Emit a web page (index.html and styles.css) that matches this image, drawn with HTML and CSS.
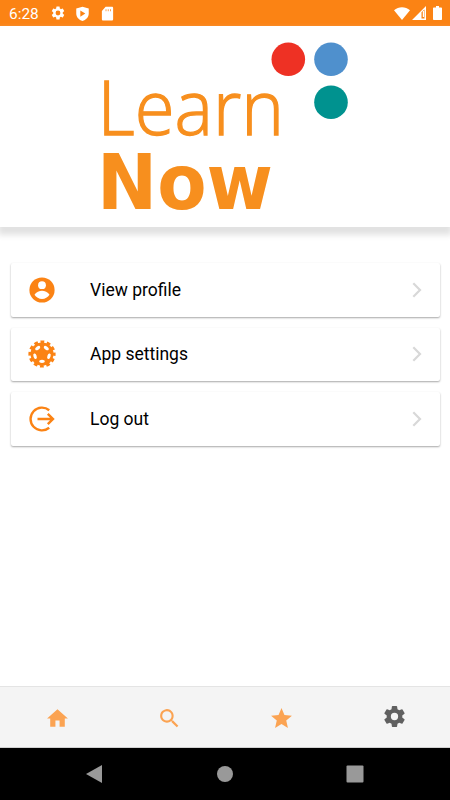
FILE: index.html
```html
<!DOCTYPE html>
<html lang="en">

<head>
  <meta charset="UTF-8">
  <meta name="viewport" content="width=device-width, initial-scale=1.0">
  <title>Learn Now - Settings</title>
  <link rel="stylesheet" href="styles.css">
</head>

<body>
  <div class="status-bar">
    <span class="time">6:28</span>
    <svg class="status-icon" viewBox="0 0 24 24"><path d="M19.14 12.94c.04-.3.06-.61.06-.94s-.02-.64-.07-.94l2.03-1.58a.49.49 0 0 0 .12-.61l-1.92-3.32a.49.49 0 0 0-.59-.22l-2.39.96a7 7 0 0 0-1.62-.94L14.4 2.81a.48.48 0 0 0-.48-.41h-3.84a.47.47 0 0 0-.47.41l-.36 2.54a7.3 7.3 0 0 0-1.62.94l-2.39-.96a.48.48 0 0 0-.59.22L2.74 8.87a.47.47 0 0 0 .12.61l2.03 1.58a6 6 0 0 0 0 1.88l-2.03 1.58a.49.49 0 0 0-.12.61l1.92 3.32c.12.22.37.29.59.22l2.39-.96c.5.38 1.03.7 1.62.94l.36 2.54c.05.24.24.41.48.41h3.84c.24 0 .44-.17.47-.41l.36-2.54a7 7 0 0 0 1.62-.94l2.39.96c.22.08.47 0 .59-.22l1.92-3.32a.47.47 0 0 0-.12-.61zM12 15.6a3.6 3.6 0 1 1 0-7.2 3.6 3.6 0 0 1 0 7.2z"/></svg>
    <svg class="status-icon shield" viewBox="0 0 24 24"><path fill-rule="evenodd" d="M12 1 2 4v8c0 6 4.300 10.200 10 12 5.700-1.800 10-6 10-12V4zM8.500 7v10l8-5z"/></svg>
    <svg class="status-icon sd" viewBox="0 0 24 24"><path fill-rule="evenodd" d="M19 1H9L3 8v13c0 1.100.9 2 2 2h14c1.100 0 2-.9 2-2V3c0-1.100-.9-2-2-2zM9 5v3.500h1.200V5zm3.500 0v3.500h1.200V5zm3.500 0v3.500h1.200V5z"/></svg>
    <div class="signals">
      <svg width="16" height="13" viewBox="0 0 16 13"><path d="M0 3.200C4.600-.9 11.400-.9 16 3.200L8 13z"/></svg>
      <svg width="14" height="14" viewBox="0 0 14 14"><path fill-rule="evenodd" d="M14 0v14H0zM9.500 6.200v6.300h3V3.500z"/><path d="M10.800 5h1.200v6h-1.200z"/></svg>
      <svg class="battery" width="9" height="14" viewBox="0 0 9 14"><path d="M3 0h3v1.500h2.200q.8 0 .8.800v10.900q0 .8-.8.800H.8q-.8 0-.8-.8V2.300q0-.8.8-.8H3z"/></svg>
    </div>
  </div>

  <header class="header">
    <svg class="logo" viewBox="0 0 270 200">
      <text class="logo-learn" x="7.500" y="108.800" textLength="186.500" lengthAdjust="spacingAndGlyphs">Learn</text>
      <text class="logo-now" x="7" y="183" textLength="176" lengthAdjust="spacingAndGlyphs">Now</text>
      <circle cx="198.300" cy="33.300" r="16.800" fill="#ee3124"/>
      <circle cx="241" cy="33.300" r="16.800" fill="#4f90cd"/>
      <circle cx="241" cy="76.200" r="16.800" fill="#00928f"/>
    </svg>
  </header>

  <main class="menu">
    <a class="card">
      <svg class="card-icon" viewBox="0 0 30 30">
        <circle cx="15" cy="15" r="12.600"/>
        <circle class="hole" cx="15" cy="10.200" r="3.900"/>
        <path class="hole" d="M7.500 19.700c1.500-2.700 5-3.900 7.500-3.900s6 1.200 7.500 3.900c-1.700 2.700-4.400 4.200-7.500 4.200s-5.800-1.500-7.500-4.200z"/>
      </svg>
      <span class="card-title">View profile</span>
      <svg class="arrow" viewBox="0 0 10 16"><path d="m1.300 1.300 6.700 6.700-6.700 6.700"/></svg>
    </a>
    <a class="card">
      <svg class="card-icon" viewBox="0 0 30 30">
        <circle cx="15" cy="15" r="11.500"/>
        <circle class="teeth" cx="15" cy="15" r="12"/>
        <g class="hole" transform="translate(15 15)">
          <ellipse cy="7.300" rx="2.900" ry="1.600"/>
          <ellipse cy="7.300" rx="2.900" ry="1.600" transform="rotate(72)"/>
          <ellipse cy="7.300" rx="2.900" ry="1.600" transform="rotate(144)"/>
          <ellipse cy="7.300" rx="2.900" ry="1.600" transform="rotate(216)"/>
          <ellipse cy="7.300" rx="2.900" ry="1.600" transform="rotate(288)"/>
        </g>
      </svg>
      <span class="card-title">App settings</span>
      <svg class="arrow" viewBox="0 0 10 16"><path d="m1.300 1.300 6.700 6.700-6.700 6.700"/></svg>
    </a>
    <a class="card">
      <svg class="card-icon logout" viewBox="0 0 30 30">
        <path d="M22.200 6.200A11.400 11.400 0 1 0 22.200 23.800M10.500 15H25.500M20.800 9.800 26 15l-5.200 5.200"/>
      </svg>
      <span class="card-title">Log out</span>
      <svg class="arrow" viewBox="0 0 10 16"><path d="m1.300 1.300 6.700 6.700-6.700 6.700"/></svg>
    </a>
  </main>

  <nav class="tabs">
    <a class="tab"><svg viewBox="0 0 24 24"><path d="M10 20v-6h4v6h5v-8h3L12 3 2 12h3v8z"/></svg></a>
    <a class="tab"><svg viewBox="0 0 24 24"><path d="M15.500 14h-.79l-.28-.27A6.500 6.500 0 1 0 13.730 14.430l.27.28v.79l5 4.990L20.490 19zm-6 0a4.500 4.500 0 1 1 0-9 4.500 4.500 0 0 1 0 9z"/></svg></a>
    <a class="tab"><svg viewBox="0 0 24 24"><path d="M12 17.270 18.180 21l-1.640-7.030L22 9.240l-7.190-.61L12 2 9.190 8.630 2 9.240l5.460 4.730L5.820 21z"/></svg></a>
    <a class="tab active"><svg viewBox="0 0 24 24"><path d="M19.430 12.980c.04-.32.07-.64.07-.98s-.03-.66-.07-.98l2.110-1.650a.5.5 0 0 0 .12-.64l-2-3.460a.5.5 0 0 0-.61-.22l-2.490 1a7.300 7.300 0 0 0-1.690-.98l-.38-2.650A.49.49 0 0 0 14 2h-4a.49.49 0 0 0-.49.420l-.38 2.650c-.61.25-1.170.59-1.690.98l-2.490-1a.49.49 0 0 0-.61.220l-2 3.460a.49.49 0 0 0 .12.640l2.110 1.650a7.900 7.900 0 0 0 0 1.960l-2.110 1.650a.5.5 0 0 0-.12.640l2 3.460c.12.220.39.300.61.220l2.490-1c.52.400 1.080.730 1.690.980l.38 2.650c.03.240.24.420.49.420h4c.25 0 .46-.18.490-.42l.38-2.650c.61-.25 1.170-.59 1.690-.98l2.490 1c.23.090.49 0 .61-.22l2-3.460a.5.5 0 0 0-.12-.64zM12 15.500a3.500 3.500 0 1 1 0-7 3.500 3.500 0 0 1 0 7z"/></svg></a>
  </nav>

  <div class="system-bar">
    <svg width="18" height="20" viewBox="0 0 18 20"><path d="M17 1v18L1 10z"/></svg>
    <svg width="18" height="18" viewBox="0 0 18 18"><circle cx="9" cy="9" r="8"/></svg>
    <svg width="18" height="18" viewBox="0 0 18 18"><rect x=".5" y=".5" width="17" height="17" rx="1"/></svg>
  </div>
</body>

</html>
```
FILE: styles.css
```css
* {
  box-sizing: border-box;
}

body {
  margin: 0;
  height: 100vh;
  display: flex;
  flex-direction: column;
  overflow: hidden;
  background-color: #fff;
  font-family: Roboto, sans-serif;
}

svg {
  display: block;
  flex: none;
}

.status-bar {
  height: 26px;
  flex: none;
  display: flex;
  align-items: center;
  padding: 0 8px 0 9px;
  background-color: #fb8314;
  color: #fff;
  fill: #fff;
}

.time {
  width: 41px;
  font-size: 15.400px;
  padding-top: 1px;
}

.status-icon {
  width: 16px;
  height: 16px;
  margin-right: 8px;
}

.status-icon.shield,
.status-icon.sd {
  width: 15px;
  height: 15px;
  margin-left: 1px;
  margin-right: 9px;
}

.signals {
  display: flex;
  align-items: center;
  gap: 2px;
  margin-left: auto;
}

.battery {
  margin-left: 5px;
}

.header {
  height: 201px;
  flex: none;
  display: flex;
  justify-content: center;
  background-color: #fff;
  box-shadow: 0 6px 6px 2px #e2e2e2;
}

.logo {
  width: 270px;
  height: 200px;
  overflow: visible;
}

.logo text {
  fill: #f78f1e;
}

.logo-learn {
  font-family: "Open Sans", "Noto Sans", sans-serif;
  font-size: 76px;
  font-weight: 300;
  stroke: #f78f1e;
  stroke-width: 1.300;
}

.logo-now {
  font-family: "DejaVu Sans", sans-serif;
  font-size: 76.500px;
  font-weight: 700;
}

.menu {
  flex: 1;
  display: flex;
  flex-direction: column;
  gap: 11px;
  padding: 36px 10px 0 11px;
}

.card {
  height: 53.500px;
  display: flex;
  align-items: center;
  padding: 0 18px 0 15.500px;
  background-color: #fff;
  border-radius: 2px;
  box-shadow: 0 1px 2px rgba(0, 0, 0, 0.35);
}

.card-icon {
  width: 30px;
  height: 30px;
  margin-right: 33.500px;
  fill: #fb8314;
}

.hole {
  fill: #fff;
}

.teeth {
  fill: none;
  stroke: #fb8314;
  stroke-width: 3.200;
  stroke-dasharray: 3.700 2.583;
  stroke-dashoffset: 1.850;
}

.logout {
  fill: none;
  stroke: #fb8314;
  stroke-width: 2.400;
}

.card-title {
  flex: 1;
  font-size: 17.500px;
  color: #000;
}

.arrow {
  width: 10px;
  height: 16px;
  fill: none;
  stroke: #d8d8d8;
  stroke-width: 2.200;
}

.tabs {
  height: 62px;
  flex: none;
  display: flex;
  padding-left: 1px;
  background-color: #f4f4f4;
  border-top: 1px solid #e4e4e4;
  border-bottom: 1px solid #d0d0d0;
}

.tab {
  flex: 1;
  display: flex;
  align-items: center;
  justify-content: center;
  padding: 2px 0 0 1px;
}

.tab svg {
  width: 25px;
  height: 25px;
  fill: #fba352;
}

.tab.active {
  padding: 0 0 2px 2px;
}

.tab.active svg {
  fill: #606060;
}

.system-bar {
  height: 52px;
  flex: none;
  display: flex;
  align-items: center;
  justify-content: space-between;
  padding: 0 86px 0 85px;
  background-color: #000;
  fill: #999;
}
```
